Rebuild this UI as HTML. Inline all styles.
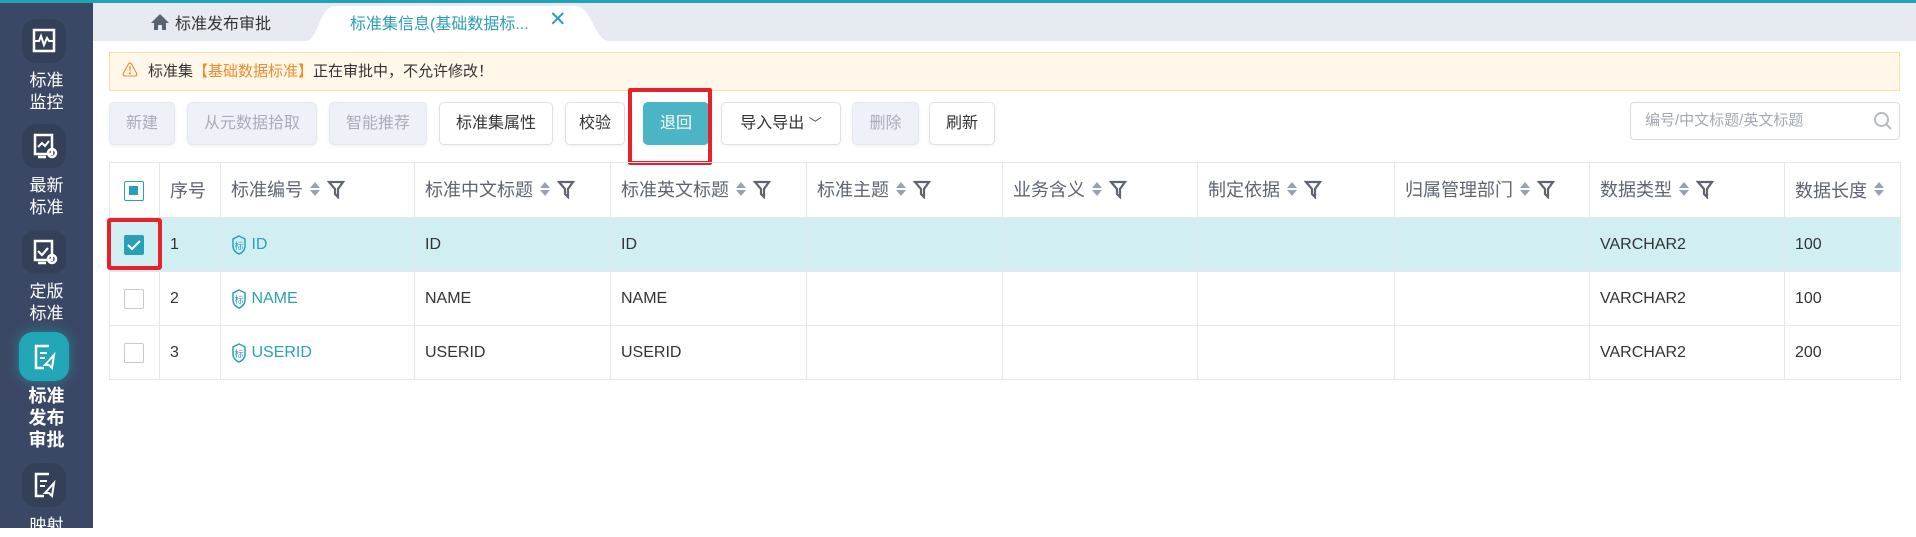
<!DOCTYPE html>
<html><head><meta charset="utf-8"><style>
*{box-sizing:border-box;margin:0;padding:0}
body{width:1916px;height:528px;overflow:hidden;background:#fff;font-family:"Liberation Sans","Noto Sans CJK SC",sans-serif;position:relative}
.abs{position:absolute}
.topbar{left:0;top:0;width:1916px;height:3px;background:#1fa3b6}
.side{left:0;top:3px;width:93px;height:525px;background:#3b4865}
.ib{position:absolute;left:22px;width:44px;height:44px;border-radius:14px;background:#334057}
.ib.act{left:19px;width:50px;height:49px;background:#22a7b8;box-shadow:0 0 12px rgba(34,167,184,.6)}
.sl{position:absolute;left:0;width:93px;text-align:center;color:#fff;font-size:17px;line-height:22px}
.tabs{left:93px;top:3px;width:1823px;height:38px;background:#e8eaf2}
.warn{left:109px;top:52px;width:1791px;height:39px;background:#fff7ea;border:1px solid #f9dfa5;font-size:15px;color:#333;line-height:37px;padding-left:38px}
.btn{position:absolute;top:102px;height:43px;border:1px solid #dde1ea;border-radius:5px;background:#fff;font-size:16px;color:#333;text-align:center;line-height:41px;box-shadow:0 1px 3px rgba(0,0,0,.06)}
.btn.dis{background:#eef1f8;color:#a8adb8;border-color:#e4e8f0}
.btn.pri{background:#4cb5c5;color:#fff;border-color:#4cb5c5}
table{position:absolute;left:109px;top:162px;width:1791px;border-collapse:collapse;table-layout:fixed}
td,th{border:1px solid #e5e7eb;height:54px;font-weight:normal;text-align:left;padding-left:10px;font-size:16px;color:#333;white-space:nowrap;overflow:hidden}
th{height:55px;color:#5e6472;font-size:18px}
tr.sel td{background:#d1eff3}
.so{display:inline-block;vertical-align:middle;margin-left:5px}
.cb{display:inline-block;width:20px;height:20px;border:1.5px solid #c5cad6;border-radius:2px;background:#fff;vertical-align:middle}
.lk{color:#2aa0b8}
</style></head><body>
<div class="abs topbar"></div>
<div class="abs side">
 <div class="ib" style="top:16px"><svg width="44" height="44" viewBox="0 0 44 44"><rect x="12" y="11" width="20" height="21" fill="none" stroke="#fff" stroke-width="2.5"/><path d="M12 22h5l2-5 3 9 3-7 2 3h5" fill="none" stroke="#fff" stroke-width="2"/></svg></div>
 <div class="sl" style="top:67px">标准<br>监控</div>
 <div class="ib" style="top:121px"><svg width="44" height="44" viewBox="0 0 44 44"><rect x="13" y="11" width="17" height="19" fill="none" stroke="#fff" stroke-width="2.5"/><path d="M16 23l4-4 3 3 4-5" fill="none" stroke="#fff" stroke-width="2"/><circle cx="30" cy="29" r="4" fill="none" stroke="#fff" stroke-width="2.5"/><path d="M16 33h8" stroke="#fff" stroke-width="2.5"/></svg></div>
 <div class="sl" style="top:172px">最新<br>标准</div>
 <div class="ib" style="top:227px"><svg width="44" height="44" viewBox="0 0 44 44"><rect x="13" y="11" width="17" height="19" fill="none" stroke="#fff" stroke-width="2.5"/><path d="M16 21l4 4 6-7" fill="none" stroke="#fff" stroke-width="2.2"/><circle cx="30" cy="29" r="4" fill="none" stroke="#fff" stroke-width="2.5"/><path d="M16 33h8" stroke="#fff" stroke-width="2.5"/></svg></div>
 <div class="sl" style="top:278px">定版<br>标准</div>
 <div class="ib act" style="top:329px"><svg width="50" height="49" viewBox="0 0 50 49"><path d="M30 14H17v22h8" fill="none" stroke="#fff" stroke-width="2.5"/><path d="M21 21h7M21 26h5" stroke="#fff" stroke-width="2"/><path d="M26 33l9-10-2 13-3-3z" fill="none" stroke="#fff" stroke-width="2"/></svg></div>
 <div class="sl" style="top:382px;font-weight:bold;font-size:18px">标准<br>发布<br>审批</div>
 <div class="ib" style="top:460px"><svg width="44" height="44" viewBox="0 0 44 44"><path d="M27 11H14v22h8" fill="none" stroke="#fff" stroke-width="2.5"/><path d="M18 18h7M18 23h5" stroke="#fff" stroke-width="2"/><path d="M23 30l9-10-2 13-3-3z" fill="none" stroke="#fff" stroke-width="2"/></svg></div>
 <div class="sl" style="top:512px">映射</div>
</div>
<div class="abs tabs"></div>
<svg class="abs" style="left:150px;top:12px" width="20" height="20" viewBox="0 0 20 20"><path d="M10 2L1 11h3v7h4v-5h4v5h4v-7h3z" fill="#5a6170"/></svg>
<div class="abs" style="left:175px;top:10px;font-size:16px;color:#333">标准发布审批</div>
<svg class="abs" style="left:305px;top:6px" width="305" height="35"><path d="M0 35C14 35 14 0 30 0H270C288 0 288 35 305 35Z" fill="#fff"/></svg>
<div class="abs" style="left:350px;top:10px;font-size:16px;color:#2aa0b8">标准集信息(基础数据标...</div>
<div class="abs" style="left:549px;top:7px;font-size:21px;color:#2aa0b8">✕</div>
<div class="abs warn"><span class="abs" style="left:12px;top:0;color:#f07b20;font-size:16px">⚠</span>标准集<span style="color:#f08c2c">【基础数据标准】</span>正在审批中，不允许修改！</div>
<div class="btn dis" style="left:109px;width:66px">新建</div>
<div class="btn dis" style="left:187px;width:130px">从元数据拾取</div>
<div class="btn dis" style="left:329px;width:98px">智能推荐</div>
<div class="btn" style="left:439px;width:114px">标准集属性</div>
<div class="btn" style="left:565px;width:60px">校验</div>
<div class="btn pri" style="left:643px;width:66px">退回</div>
<div class="abs" style="left:628px;top:88px;width:84px;height:77px;border:4px solid #e8202a;border-radius:2px"></div>
<div class="btn" style="left:721px;width:120px">导入导出 <span style="font-size:13px;color:#555">﹀</span></div>
<div class="btn dis" style="left:852px;width:67px">删除</div>
<div class="btn" style="left:929px;width:66px">刷新</div>
<div class="abs" style="left:1630px;top:102px;width:270px;height:38px;border:1px solid #d5dae5;border-radius:4px;font-size:15px;color:#a3a8b4;line-height:36px;padding-left:14px">编号/中文标题/英文标题
<svg class="abs" style="left:242px;top:8px" width="20" height="20" viewBox="0 0 20 20"><circle cx="8.5" cy="8.5" r="6.5" fill="none" stroke="#b5bac4" stroke-width="2"/><path d="M13 13l5 5" stroke="#b5bac4" stroke-width="2"/></svg></div>
<table>
<colgroup><col style="width:50px"><col style="width:61px"><col style="width:194px"><col style="width:196px"><col style="width:196px"><col style="width:196px"><col style="width:195px"><col style="width:197px"><col style="width:195px"><col style="width:195px"><col style="width:116px"></colgroup>
<tr><th style="padding-left:14px"><span class="cb" style="border-color:#2aa0b8;position:relative"><span class="abs" style="left:4px;top:4px;width:9px;height:9px;background:#2aa0b8"></span></span></th><th>序号</th>
<th>标准编号<span class="so"><svg width="14" height="18"><path d="M7 2l5 6H2zM7 16l5-6H2z" fill="#9aa1b4"/></svg></span><span class="so"><svg width="18" height="20"><path d="M2 3h14l-5 7v8l-3-3v-5z" fill="none" stroke="#5e6472" stroke-width="2.2"/></svg></span></th>
<th>标准中文标题<span class="so"><svg width="14" height="18"><path d="M7 2l5 6H2zM7 16l5-6H2z" fill="#9aa1b4"/></svg></span><span class="so"><svg width="18" height="20"><path d="M2 3h14l-5 7v8l-3-3v-5z" fill="none" stroke="#5e6472" stroke-width="2.2"/></svg></span></th>
<th>标准英文标题<span class="so"><svg width="14" height="18"><path d="M7 2l5 6H2zM7 16l5-6H2z" fill="#9aa1b4"/></svg></span><span class="so"><svg width="18" height="20"><path d="M2 3h14l-5 7v8l-3-3v-5z" fill="none" stroke="#5e6472" stroke-width="2.2"/></svg></span></th>
<th>标准主题<span class="so"><svg width="14" height="18"><path d="M7 2l5 6H2zM7 16l5-6H2z" fill="#9aa1b4"/></svg></span><span class="so"><svg width="18" height="20"><path d="M2 3h14l-5 7v8l-3-3v-5z" fill="none" stroke="#5e6472" stroke-width="2.2"/></svg></span></th>
<th>业务含义<span class="so"><svg width="14" height="18"><path d="M7 2l5 6H2zM7 16l5-6H2z" fill="#9aa1b4"/></svg></span><span class="so"><svg width="18" height="20"><path d="M2 3h14l-5 7v8l-3-3v-5z" fill="none" stroke="#5e6472" stroke-width="2.2"/></svg></span></th>
<th>制定依据<span class="so"><svg width="14" height="18"><path d="M7 2l5 6H2zM7 16l5-6H2z" fill="#9aa1b4"/></svg></span><span class="so"><svg width="18" height="20"><path d="M2 3h14l-5 7v8l-3-3v-5z" fill="none" stroke="#5e6472" stroke-width="2.2"/></svg></span></th>
<th>归属管理部门<span class="so"><svg width="14" height="18"><path d="M7 2l5 6H2zM7 16l5-6H2z" fill="#9aa1b4"/></svg></span><span class="so"><svg width="18" height="20"><path d="M2 3h14l-5 7v8l-3-3v-5z" fill="none" stroke="#5e6472" stroke-width="2.2"/></svg></span></th>
<th>数据类型<span class="so"><svg width="14" height="18"><path d="M7 2l5 6H2zM7 16l5-6H2z" fill="#9aa1b4"/></svg></span><span class="so"><svg width="18" height="20"><path d="M2 3h14l-5 7v8l-3-3v-5z" fill="none" stroke="#5e6472" stroke-width="2.2"/></svg></span></th>
<th>数据长度<span class="so"><svg width="14" height="18"><path d="M7 2l5 6H2zM7 16l5-6H2z" fill="#9aa1b4"/></svg></span></th></tr>
<tr class="sel"><td style="padding-left:14px"><span class="cb" style="background:#2aa0b8;border-color:#2aa0b8;position:relative"><svg class="abs" style="left:2px;top:3px" width="14" height="12"><path d="M1 6l4 4 8-8" fill="none" stroke="#fff" stroke-width="2"/></svg></span></td><td>1</td><td class="lk"><svg width="16" height="20" style="vertical-align:middle" viewBox="0 0 16 20"><path d="M8 1l6 3v7c0 4-3 7-6 8-3-1-6-4-6-8V4z" fill="none" stroke="#2aa0b8" stroke-width="1.5"/><text x="8" y="14" font-size="9" fill="#2aa0b8" text-anchor="middle">标</text></svg> ID</td><td>ID</td><td>ID</td><td></td><td></td><td></td><td></td><td>VARCHAR2</td><td>100</td></tr>
<tr><td style="padding-left:14px"><span class="cb"></span></td><td>2</td><td class="lk"><svg width="16" height="20" style="vertical-align:middle" viewBox="0 0 16 20"><path d="M8 1l6 3v7c0 4-3 7-6 8-3-1-6-4-6-8V4z" fill="none" stroke="#2aa0b8" stroke-width="1.5"/><text x="8" y="14" font-size="9" fill="#2aa0b8" text-anchor="middle">标</text></svg> NAME</td><td>NAME</td><td>NAME</td><td></td><td></td><td></td><td></td><td>VARCHAR2</td><td>100</td></tr>
<tr><td style="padding-left:14px"><span class="cb"></span></td><td>3</td><td class="lk"><svg width="16" height="20" style="vertical-align:middle" viewBox="0 0 16 20"><path d="M8 1l6 3v7c0 4-3 7-6 8-3-1-6-4-6-8V4z" fill="none" stroke="#2aa0b8" stroke-width="1.5"/><text x="8" y="14" font-size="9" fill="#2aa0b8" text-anchor="middle">标</text></svg> USERID</td><td>USERID</td><td>USERID</td><td></td><td></td><td></td><td></td><td>VARCHAR2</td><td>200</td></tr>
</table>
<div class="abs" style="left:107px;top:218px;width:55px;height:52px;border:4px solid #e8202a;border-radius:3px"></div>
</body></html>
